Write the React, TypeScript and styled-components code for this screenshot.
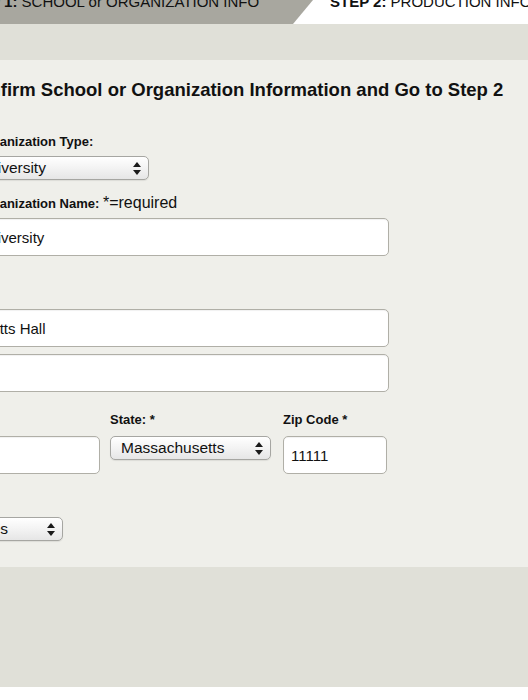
import styled, { createGlobalStyle } from 'styled-components';

const GlobalStyle = createGlobalStyle`
	html,
	body {
		margin: 0;
		padding: 0;
		background: #fff;
		overflow: hidden;
	}
	body {
		font-family: 'Liberation Sans', Arial, Helvetica, sans-serif;
		color: #111;
	}
	* {
		box-sizing: border-box;
	}
`;

const Page = styled.div`
	width: 900px;
	margin: -12px 0 0 -139px;
`;

const TabBar = styled.div`
	display: flex;
	height: 36px;
	background: #fff;
`;

const Tab = styled.div<{ $done?: boolean }>`
	height: 100%;
	padding-top: 6px;
	font-size: 15px;
	line-height: 16px;
	text-transform: uppercase;
	color: #111;
	white-space: nowrap;
	${({ $done }) =>
		$done
			? `
		width: 462px;
		padding-left: 100px;
		background: #a8a79f;
		clip-path: polygon(0 0, 100% 0, calc(100% - 30px) 100%, 0 100%);
	`
			: `
		padding-left: 7px;
	`}

	b {
		font-weight: 700;
	}
	em {
		font-style: normal;
		text-transform: none;
	}
`;

const Stage = styled.div`
	background: #e0e0d8;
	padding: 36px 0 120px;
`;

const Panel = styled.section`
	background: #efefea;
	padding: 18px 40px 26px;
`;

const Heading = styled.h2`
	margin: 0 0 32px;
	font-size: 18.5px;
	line-height: 24px;
	font-weight: 700;
	white-space: nowrap;
`;

const Form = styled.div`
	display: flex;
	flex-direction: column;
	margin-left: 12px;
`;

const Field = styled.div<{ $gap?: number }>`
	display: flex;
	flex-direction: column;
	margin-top: ${({ $gap }) => $gap ?? 0}px;
`;

const Label = styled.label<{ $space?: number }>`
	display: block;
	margin-bottom: ${({ $space }) => $space ?? 6}px;
	font-size: 13px;
	line-height: 16px;
	font-weight: 700;
	white-space: nowrap;

	span {
		font-size: 16px;
		font-weight: 400;
	}
`;

const TextInput = styled.input<{ $width: number }>`
	width: ${({ $width }) => $width}px;
	height: 38px;
	padding: 0 7px;
	border: 1px solid #b0afa7;
	border-radius: 5px;
	background: #fff;
	box-shadow: inset 0 1px 1px rgba(0, 0, 0, 0.06);
	font-family: 'Liberation Sans', Arial, sans-serif;
	font-size: 15px;
	color: #111;
	outline: none;
`;

const StackedInput = styled(TextInput)`
	margin-top: 7px;
`;

const SelectBox = styled.div<{ $width: number; $inset?: number }>`
	display: flex;
	align-items: center;
	justify-content: space-between;
	width: ${({ $width }) => $width}px;
	height: 24px;
	padding: 0 7px 0 ${({ $inset }) => $inset ?? 10}px;
	border: 1px solid #a6a6a2;
	border-radius: 5px;
	background: linear-gradient(#ffffff, #f3f3f3 50%, #e6e6e6);
	box-shadow: 0 1px 1px rgba(0, 0, 0, 0.08);
	font-size: 15.5px;
	color: #111;
	white-space: nowrap;
`;

const Row = styled.div`
	display: flex;
	align-items: flex-start;
	gap: 10px;
	margin-top: 20px;
`;

const Cell = styled.div<{ $after?: number }>`
	display: flex;
	flex-direction: column;
	margin-right: ${({ $after }) => $after ?? 0}px;
`;

function Arrows() {
	return (
		<svg width="8" height="13" viewBox="0 0 8 13" aria-hidden="true">
			<polygon points="0,5 4,0 8,5" fill="#1a1a1a" />
			<polygon points="0,8 4,13 8,8" fill="#1a1a1a" />
		</svg>
	);
}

function Select({ value, width, inset }: { value: string; width: number; inset?: number }) {
	return (
		<SelectBox $width={width} $inset={inset} role="combobox">
			<span>{value}</span>
			<Arrows />
		</SelectBox>
	);
}

export default function App() {
	return (
		<>
			<GlobalStyle />
			<Page>
				<TabBar>
					<Tab $done>
						<b>Step 1:</b> School <em>or</em> Organization Info
					</Tab>
					<Tab>
						<b>Step 2:</b> Production Info
					</Tab>
				</TabBar>
				<Stage>
					<Panel>
						<Heading>Please Confirm School or Organization Information and Go to Step 2</Heading>
						<Form>
							<Field>
								<Label>School or Organization Type:</Label>
								<Select value="College/University" width={236} inset={7} />
							</Field>
							<Field $gap={15}>
								<Label>
									School or Organization Name: <span>*=required</span>
								</Label>
								<TextInput $width={476} defaultValue="Harvard University" />
							</Field>
							<Field $gap={31}>
								<Label>Address: *</Label>
								<TextInput $width={476} defaultValue="Room 4 Watts Hall" />
								<StackedInput $width={476} defaultValue="" />
							</Field>
							<Row>
								<Cell>
									<Label $space={8}>City: *</Label>
									<TextInput $width={187} defaultValue="Cambridge" />
								</Cell>
								<Cell $after={2}>
									<Label $space={8}>State: *</Label>
									<Select value="Massachusetts" width={161} />
								</Cell>
								<Cell>
									<Label $space={8}>Zip Code *</Label>
									<TextInput $width={104} defaultValue="11111" />
								</Cell>
							</Row>
							<Field $gap={21}>
								<Label>Country: *</Label>
								<Select value="United States" width={150} inset={1} />
							</Field>
						</Form>
					</Panel>
				</Stage>
			</Page>
		</>
	);
}
